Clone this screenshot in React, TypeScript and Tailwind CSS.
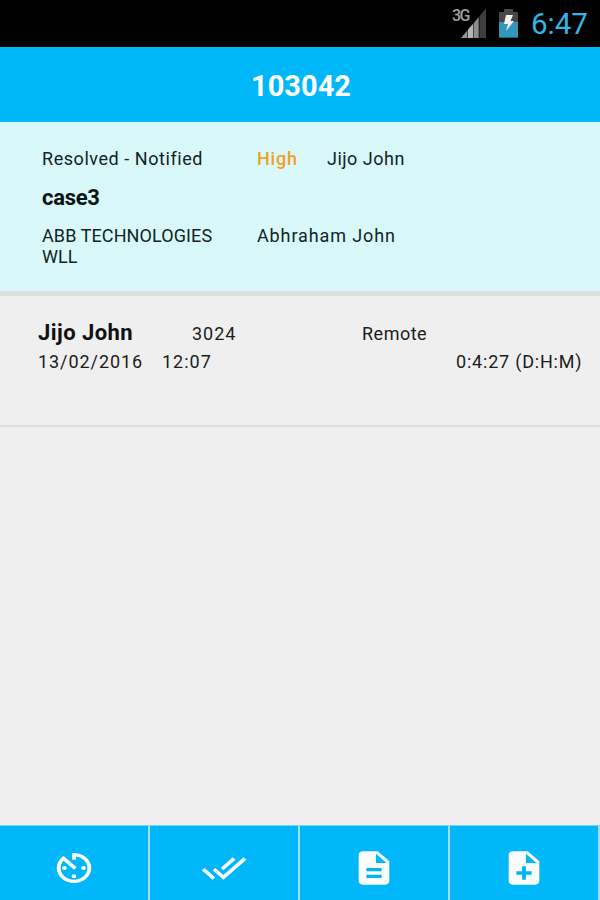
import type { ReactNode } from "react";

const tabs = [
  "M10.800 17c0 .7.500 1.200 1.200 1.200s1.200-.5 1.200-1.200-.5-1.200-1.200-1.200-1.200.5-1.200 1.200zM11 3v4h2V5.080c3.390.49 6 3.390 6 6.920 0 3.870-3.130 7-7 7s-7-3.130-7-7c0-1.680.59-3.220 1.580-4.420L12 13l1.410-1.410-6.800-6.800v.02C4.420 6.450 3 9.050 3 12c0 4.970 4.020 9 9 9 4.970 0 9-4.030 9-9s-4.030-9-9-9h-1zm7.200 9c0-.7-.5-1.200-1.200-1.200s-1.200.5-1.200 1.200.5 1.200 1.200 1.200 1.200-.5 1.200-1.200zM5.800 12c0 .7.500 1.200 1.200 1.200s1.200-.5 1.200-1.200-.5-1.200-1.200-1.200-1.200.5-1.200 1.200z",
  "M18 7l-1.41-1.41-6.34 6.34 1.41 1.41L18 7zm4.24-1.41L11.66 16.17 7.48 12l-1.41 1.41L11.66 19l12-12-1.42-1.41zM.41 13.41L6 19l1.41-1.41L1.83 12 .41 13.41z",
  "M14 2H6c-1.1 0-1.99.9-1.99 2L4 20c0 1.1.89 2 1.99 2H18c1.1 0 2-.9 2-2V8l-6-6zm2 16H8v-2h8v2zm0-4H8v-2h8v2zm-3-5V3.5L18.5 9H13z",
  "M14 2H6c-1.1 0-1.99.9-1.99 2L4 20c0 1.1.89 2 1.99 2H18c1.1 0 2-.9 2-2V8l-6-6zm2 14h-3v3h-2v-3H8v-2h3v-3h2v3h3v2zm-3-7V3.5L18.5 9H13z",
];

function Text({ className, children }: { className: string; children: ReactNode }) {
  return <span className={`block shrink-0 whitespace-nowrap ${className}`}>{children}</span>;
}

function StatusBar() {
  return (
    <div className="flex h-[47px] shrink-0 items-start bg-black pl-[452px]">
      <svg width="34" height="47" viewBox="0 0 34 47">
        <path d="M9 38L34 8.500V38Z" fill="#3f3f3f" />
        <path d="M9 38L15 31V38Z" fill="#969696" />
        <path d="M16 38V29.500L21 24V38Z" fill="#b5b5b5" />
        <path d="M22 38V23L26.500 17.500V38Z" fill="#8d8d8d" />
        <path d="M27.500 38V16" stroke="#222" />
        <text x="0" y="21" fill="#a0a0a0" fontFamily="Roboto, sans-serif" fontSize="16" fontWeight="500" textLength="18.500">3G</text>
      </svg>
      <svg className="ml-[13px]" width="20" height="47" viewBox="0 0 20 47">
        <path d="M0 12H5V9H14V12H19V37.500H0Z" fill="#484848" />
        <path d="M0 22H19V37.500H0Z" fill="#3596bb" />
        <path d="M7 15H14L11.500 21H15L7 31L9 24H5Z" fill="#f2f2f2" />
      </svg>
      <Text className="ml-[12px] mt-[5px] text-[29.5px] leading-[38px] text-[#33b5e5]">6:47</Text>
    </div>
  );
}

export default function App() {
  return (
    <div className="flex h-[900px] w-[600px] flex-col overflow-hidden bg-[#efefef] font-['Roboto',sans-serif] text-[18px] leading-[21px] text-[#1c1c1c]">
      <StatusBar />
      <header className="flex h-[75px] shrink-0 items-center justify-center bg-[#00b7f9] pl-[2px] pt-[2px] text-[29px] font-bold text-white">
        <Text className="leading-[34px]">103042</Text>
      </header>
      <section className="h-[174px] shrink-0 border-b-[5px] border-[#dedede] bg-[#d8f8fa] pl-[42px] pt-[26px] text-[#122424]">
        <div className="flex">
          <Text className="w-[215px] tracking-[0.55px]">Resolved - Notified</Text>
          <Text className="w-[70px] font-medium tracking-[0.8px] text-[#f0a028]">High</Text>
          <Text className="tracking-[0.5px]">Jijo John</Text>
        </div>
        <Text className="mt-[16px] text-[22px] font-bold leading-[26px] tracking-[-0.3px] text-[#081414]">case3</Text>
        <div className="mt-[14px] flex">
          <p className="w-[215px] tracking-[0.1px]">ABB TECHNOLOGIES<br />WLL</p>
          <Text className="tracking-[0.88px]">Abhraham John</Text>
        </div>
      </section>
      <section className="h-[131px] shrink-0 border-b-2 border-[#dedede] pl-[38px] pt-[24px]">
        <div className="flex items-baseline">
          <Text className="w-[154px] text-[22px] font-bold leading-[26px] tracking-[0.45px] text-[#111]">Jijo John</Text>
          <Text className="w-[170px] tracking-[1px]">3024</Text>
          <Text className="tracking-[0.5px]">Remote</Text>
        </div>
        <div className="mt-[5px] flex">
          <Text className="w-[124px] tracking-[0.93px]">13/02/2016</Text>
          <Text className="w-[294px] tracking-[1px]">12:07</Text>
          <Text className="tracking-[0.8px]">0:4:27 (D:H:M)</Text>
        </div>
      </section>
      <nav className="mt-auto grid h-[75px] shrink-0 grid-cols-4 border-t border-[#7cd5f5] bg-[#00b7f9]">
        {tabs.map((d) => (
          <div key={d} className="flex justify-center border-r-2 border-[#a5dcf0] pt-[22px]">
            <svg className="h-[40px] w-[46px]" viewBox="0 0 24 24" preserveAspectRatio="none" fill="#fafcfd">
              <path d={d} />
            </svg>
          </div>
        ))}
      </nav>
    </div>
  );
}
